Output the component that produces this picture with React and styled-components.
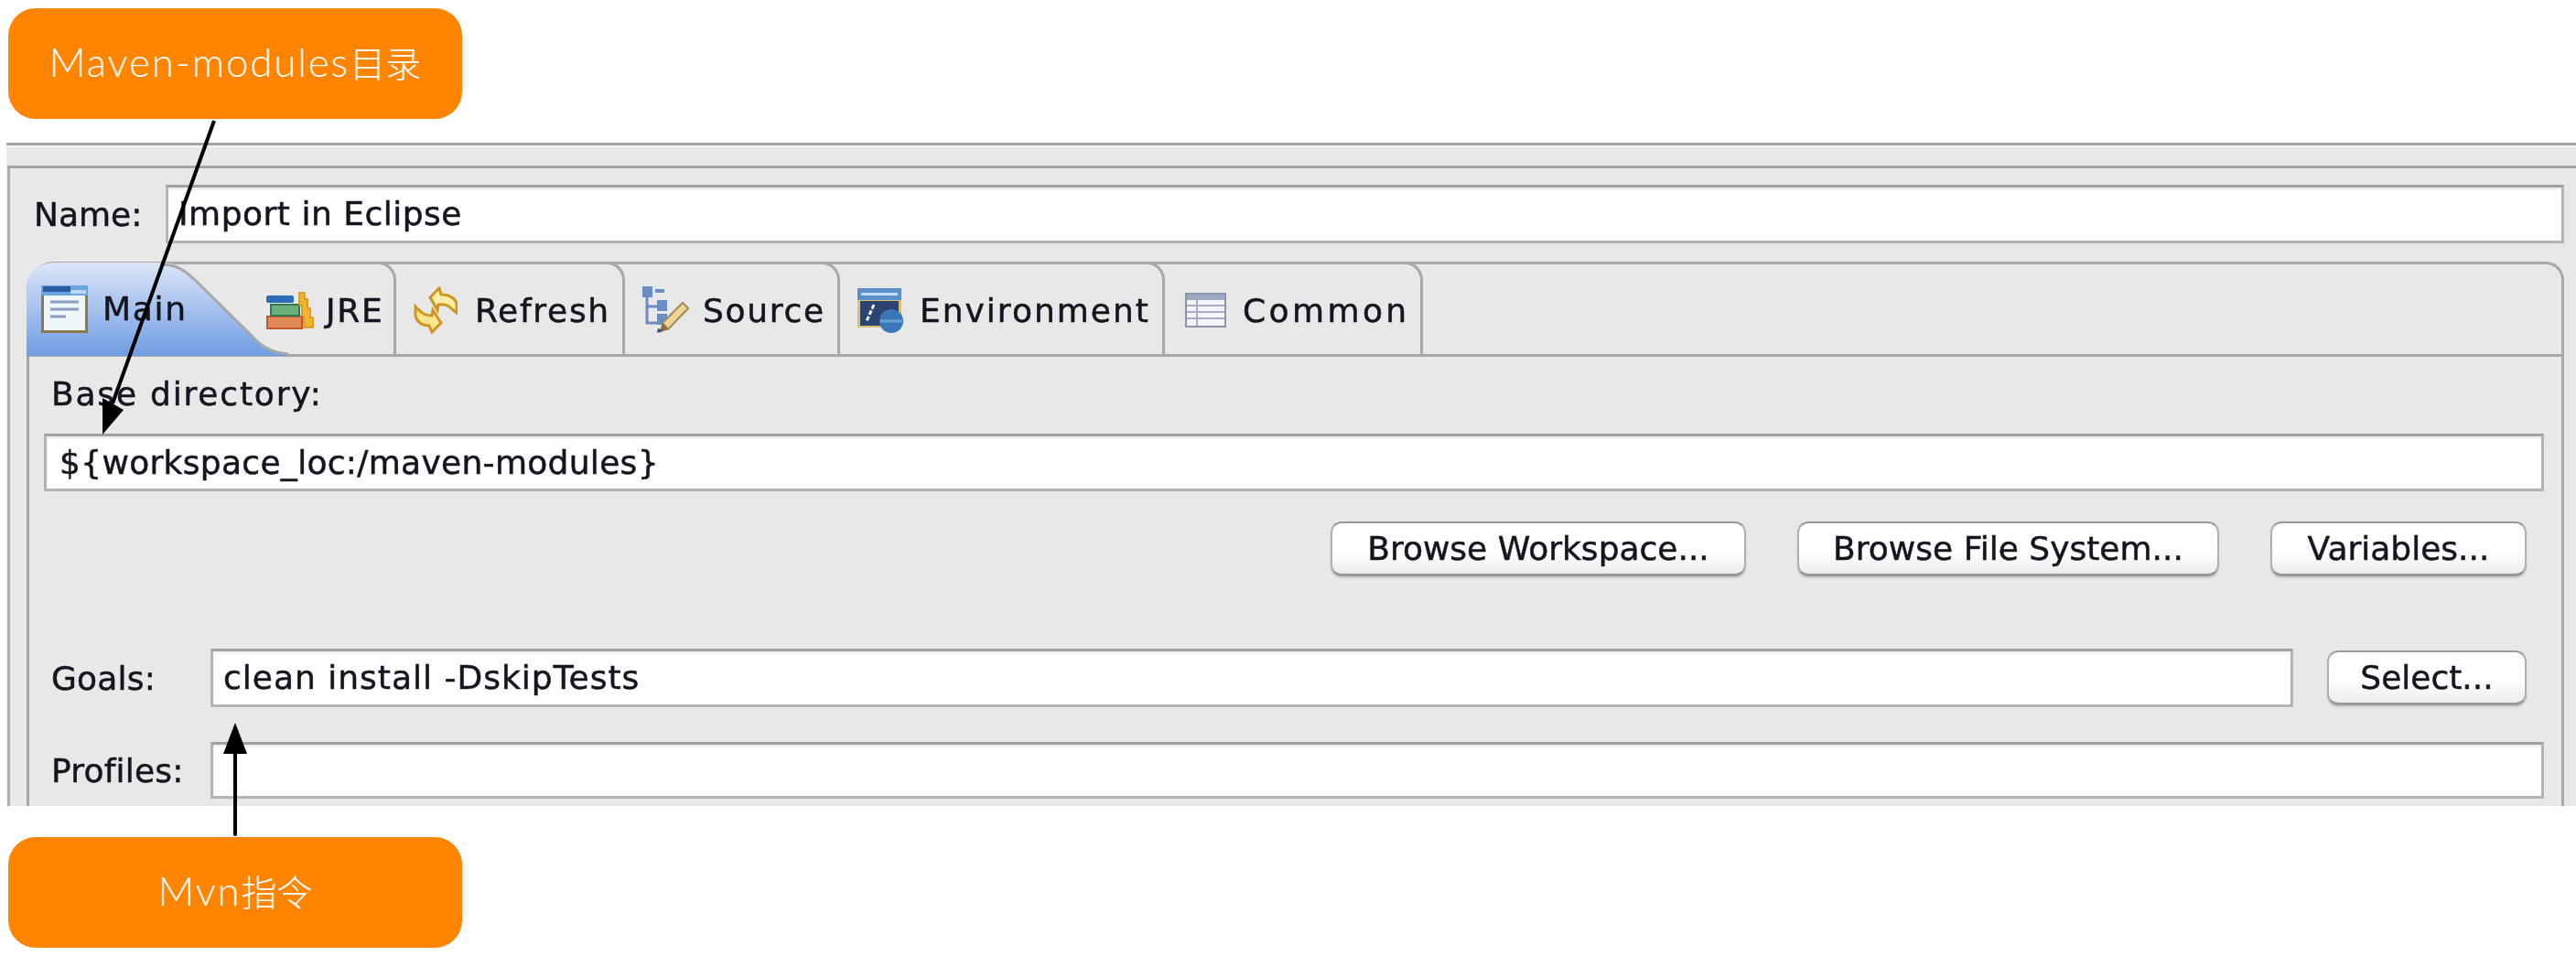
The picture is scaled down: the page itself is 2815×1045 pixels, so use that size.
import React from "react";
import styled, { createGlobalStyle } from "styled-components";

const Global = createGlobalStyle`
  * { box-sizing: border-box; }
  html, body { margin: 0; padding: 0; background: #fff; }
`;

const Page = styled.div`
  position: relative;
  width: 2815px;
  height: 1045px;
  padding-top: 9px;
  overflow: hidden;
  background: #fff;
  font-family: "DejaVu Sans", sans-serif;
`;

const Callout = styled.div`
  display: flex;
  align-items: center;
  justify-content: center;
  width: 496px;
  height: 121px;
  margin-left: 9px;
  padding-bottom: 5px;
  border-radius: 30px;
  background: #ff8400;
  color: #fff;
  font-family: Lato, "Noto Sans CJK SC", sans-serif;
  font-size: 44px;
  font-weight: 300;
  letter-spacing: 1.8px;
`;

const CalloutCjk = styled.span`
  font-size: 39px;
  letter-spacing: 0;
`;

const Panel = styled.div`
  height: 725px;
  margin: 26px 0 34px 7px;
  padding: 22px 0 0 1px;
  overflow: hidden;
  border-top: 3px solid #a2a2a2;
  background: #e8e8e8;
  box-shadow: inset 0 2px 0 #f6f6f6;
  color: #151520;
  font-size: 36px;
  -webkit-text-stroke: 0.5px #151520;
  filter: blur(0.7px);
`;

const Frame = styled.div`
  height: 700px;
  padding: 18px 13px 0 18px;
  border-top: 3px solid #a4a4a4;
  border-left: 3px solid #aeaeae;
`;

const NameRow = styled.div`
  display: flex;
  align-items: center;
  margin-bottom: 20px;
`;

const Label = styled.span`
  flex: none;
  width: ${(p) => p.$width}px;
  margin-left: 8px;
  letter-spacing: ${(p) => p.$spacing ?? 0.2}px;
  white-space: nowrap;
`;

const Field = styled.div`
  flex: ${(p) => (p.$width ? "none" : 1)};
  width: ${(p) => (p.$width ? `${p.$width}px` : "auto")};
  height: ${(p) => p.$height}px;
  padding-left: ${(p) => p.$inset || 11}px;
  border: 3px solid #b4b4b4;
  border-top-color: #a0a0a0;
  background: #fff;
  box-shadow: inset 0 3px 2px #f0f0f0;
  line-height: ${(p) => p.$height - 6}px;
  letter-spacing: ${(p) => p.$spacing ?? 1}px;
  white-space: nowrap;
`;

const Folder = styled.div`
  height: 597px;
  border: 3px solid #a8a8a8;
  border-bottom: 0;
  border-radius: 30px 20px 0 0;
`;

const TabBar = styled.div`
  display: flex;
  height: 101px;
  border-bottom: 3px solid #a8a8a8;
`;

const Tab = styled.div`
  position: relative;
  display: flex;
  flex: none;
  align-items: center;
  gap: ${(p) => p.$gap}px;
  width: ${(p) => p.$width}px;
  height: 101px;
  margin-top: -3px;
  padding: 2px 0 0 ${(p) => p.$pad}px;
  border-top: 3px solid #a8a8a8;
  border-right: 3px solid #a8a8a8;
  border-top-right-radius: 20px;
  letter-spacing: ${(p) => p.$spacing ?? 1.7}px;
  white-space: nowrap;
`;

const MainTab = styled(Tab)`
  border: 0;
  border-radius: 0;
  & > svg,
  & > span {
    position: relative;
  }
`;

const TabShape = styled.svg`
  position: absolute !important;
  top: -1px;
  left: -3px;
  overflow: visible;
`;

const Content = styled.div`
  padding: 19px 19px 0 16px;
`;

const BaseLabel = styled.div`
  height: 44px;
  margin-bottom: 21px;
  padding-left: 8px;
  line-height: 44px;
  letter-spacing: 1.8px;
`;

const ButtonRow = styled.div`
  display: flex;
  justify-content: flex-end;
  gap: 56px;
  margin: 33px 0 79px;
  padding-right: 19px;
`;

const Button = styled.div`
  display: flex;
  flex: none;
  align-items: center;
  justify-content: center;
  width: ${(p) => p.$width}px;
  height: 60px;
  border: 2px solid #b0b0b0;
  border-top-color: #989898;
  border-bottom: 3px solid #999;
  border-radius: 12px;
  background: linear-gradient(#fff 0%, #fff 55%, #ececec 100%);
  box-shadow: 0 2px 2px #c8c8c8;
  white-space: nowrap;
`;

const FieldRow = styled.div`
  display: flex;
  align-items: center;
  margin-bottom: ${(p) => p.$gap || 0}px;
`;

const SelectSlot = styled.div`
  margin: 0 19px 0 37px;
`;

const Overlay = styled.svg`
  position: absolute;
  top: 0;
  left: 0;
  pointer-events: none;
`;

const MainIcon = () => (
  <svg width="51" height="52" viewBox="0 0 51 52">
    <rect x="1.5" y="6" width="48" height="44.5" fill="#eef6fa" stroke="#8a7a4e" strokeWidth="3" />
    <rect x="0" y="0" width="51" height="11" fill="#6aa4dc" />
    <rect x="2" y="1" width="30" height="6" fill="#2c5aa0" />
    <rect x="32" y="5" width="17" height="4" fill="#bcd8f0" />
    <path d="M10 18h31M10 26h31M10 34h17" stroke="#8b9cc4" strokeWidth="3" />
  </svg>
);

const JreIcon = () => (
  <svg width="53" height="42" viewBox="0 0 53 42">
    <rect x="1" y="28" width="38" height="13" fill="#e08a58" stroke="#c0582a" strokeWidth="2" />
    <rect x="5" y="15" width="31" height="12" fill="#6cb07c" stroke="#2e7a50" strokeWidth="2" />
    <rect x="0" y="5" width="30" height="8" rx="2" fill="#2a6cb8" />
    <path d="M36 2h6v7h3v10h3v10h3v11h-10v-12h-2v-12h-3z" fill="#f2b62c" stroke="#dc8c10" strokeWidth="1.5" />
  </svg>
);

const RefreshIcon = () => (
  <svg width="48" height="52" viewBox="0 0 48 52">
    <path d="M18 12l10-10l2 7c8 0 14 3 17 9v11l-5-4c-3-4-9-6-15-5l-1 6z" fill="#fdeea8" stroke="#cf961e" strokeWidth="3" />
    <path d="M30 40l-10 10l-3-7c-8 0-13-4-15-10v-11l5 5c3 3 8 5 13 5l1-6z" fill="#fde692" stroke="#cf961e" strokeWidth="3" />
  </svg>
);

const SourceIcon = () => (
  <svg width="51" height="52" viewBox="0 0 51 52">
    <path d="M5 10v30h12M5 22h12" fill="none" stroke="#6c8cc4" strokeWidth="3" />
    <path d="M14 5h10" stroke="#6c8cc4" strokeWidth="4" />
    <rect x="0" y="0" width="11" height="12" fill="#6c8cc4" />
    <rect x="16" y="15" width="11" height="12" fill="#6c8cc4" />
    <rect x="16" y="30" width="11" height="12" fill="#6c8cc4" />
    <path d="M22 40L44 18l6 6L28 47z" fill="#ecd49a" stroke="#a08a58" strokeWidth="2" />
    <path d="M22 40l6 7l-10 4z" fill="#8a7040" />
    <path d="M17 46l5 2l-6 3z" fill="#1c4c88" />
  </svg>
);

const EnvIcon = () => (
  <svg width="52" height="49" viewBox="0 0 52 49">
    <rect x="0" y="0" width="48" height="43" fill="#d8c070" />
    <rect x="3" y="14" width="42" height="27" fill="#2c4470" />
    <rect x="0" y="0" width="48" height="13" fill="#5c90c8" />
    <rect x="4" y="5" width="40" height="3" fill="#c0dcf4" />
    <path d="M18 18L10 36" stroke="#eef4fa" strokeWidth="3" strokeDasharray="5 2" />
    <circle cx="37" cy="36" r="13" fill="#3c78b8" />
    <path d="M25 36h24" stroke="#6ca0d4" strokeWidth="3" />
  </svg>
);

const CommonIcon = () => (
  <svg width="45" height="38" viewBox="0 0 45 38">
    <rect x="1" y="1" width="43" height="36" fill="#f2f4f8" stroke="#8a94b0" strokeWidth="2" />
    <rect x="2" y="2" width="41" height="6" fill="#a0a8c0" />
    <path d="M2 14h41M2 21h41M2 28h41" stroke="#a4aec8" strokeWidth="2" />
    <path d="M13 8v28" stroke="#a4aec8" strokeWidth="2" />
  </svg>
);

export default function App() {
  return (
    <Page>
      <Global />
      <Callout>
        Maven-modules<CalloutCjk>目录</CalloutCjk>
      </Callout>
      <Panel>
        <Frame>
          <NameRow>
            <Label $width={144} $spacing={0}>
              Name:
            </Label>
            <Field $height={64} $spacing={0.5}>
              Import in Eclipse
            </Field>
          </NameRow>
          <Folder>
            <TabBar>
              <MainTab $width={250} $pad={13} $gap={16}>
                <TabShape width="283" height="104" viewBox="0 0 283 104">
                  <defs>
                    <linearGradient id="mainTabFill" x1="0" y1="0" x2="0" y2="1">
                      <stop offset="0" stopColor="#dbe6f8" />
                      <stop offset="1" stopColor="#6f9ce2" />
                    </linearGradient>
                  </defs>
                  <path
                    d="M0 104V32Q0 2 32 2H146C164 2 172 9 184 20L242 77C255 91 264 100 286 102V104Z"
                    fill="url(#mainTabFill)"
                  />
                  <path
                    d="M146 4C164 4 172 10 184 21L242 78C255 92 264 100 286 102"
                    fill="none"
                    stroke="#a8a8a8"
                    strokeWidth="3"
                  />
                </TabShape>
                <MainIcon />
                <span>Main</span>
              </MainTab>
              <Tab $width={151} $pad={9} $gap={12}>
                <JreIcon />
                <span>JRE</span>
              </Tab>
              <Tab $width={250} $pad={19} $gap={19}>
                <RefreshIcon />
                <span>Refresh</span>
              </Tab>
              <Tab $width={235} $pad={19} $gap={15}>
                <SourceIcon />
                <span>Source</span>
              </Tab>
              <Tab $width={355} $pad={19} $gap={16} $spacing={2}>
                <EnvIcon />
                <span>Environment</span>
              </Tab>
              <Tab $width={282} $pad={22} $gap={18} $spacing={3.4}>
                <CommonIcon />
                <span>Common</span>
              </Tab>
            </TabBar>
            <Content>
              <BaseLabel>Base directory:</BaseLabel>
              <Field $height={63} $inset={14} $spacing={0.3}>
                {"${workspace_loc:/maven-modules}"}
              </Field>
              <ButtonRow>
                <Button $width={454}>Browse Workspace...</Button>
                <Button $width={461}>Browse File System...</Button>
                <Button $width={280}>Variables...</Button>
              </ButtonRow>
              <FieldRow $gap={38}>
                <Label $width={174}>Goals:</Label>
                <Field $height={64}>clean install -DskipTests</Field>
                <SelectSlot>
                  <Button $width={218}>Select...</Button>
                </SelectSlot>
              </FieldRow>
              <FieldRow>
                <Label $width={174}>Profiles:</Label>
                <Field $height={62} />
              </FieldRow>
            </Content>
          </Folder>
        </Frame>
      </Panel>
      <Callout>
        Mvn<CalloutCjk>指令</CalloutCjk>
      </Callout>
      <Overlay width="2815" height="1045" viewBox="0 0 2815 1045">
        <path d="M234 132L123 441" stroke="#000" strokeWidth="4" />
        <path d="M112 475L112 435L135 448Z" fill="#000" />
        <path d="M257 912V824" stroke="#000" strokeWidth="4" strokeLinecap="round" />
        <path d="M257 790L244 824H270Z" fill="#000" />
      </Overlay>
    </Page>
  );
}
